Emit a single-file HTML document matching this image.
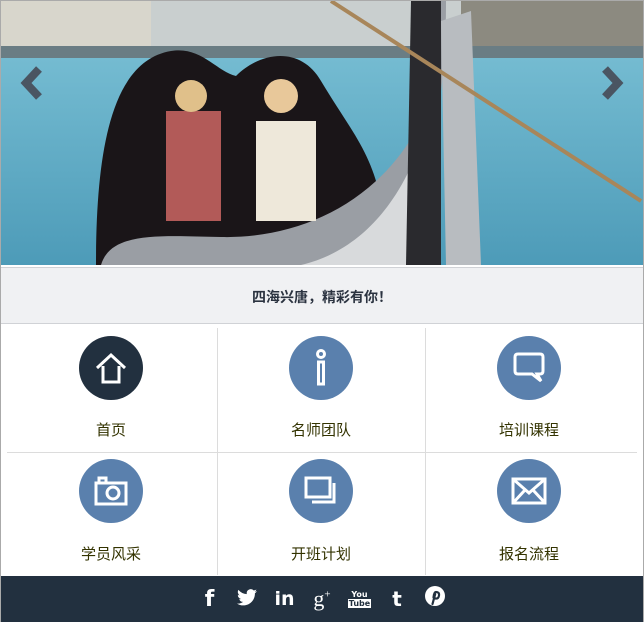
<!DOCTYPE html>
<html><head><meta charset="utf-8"><style>
*{margin:0;padding:0;box-sizing:border-box}
body{width:644px;height:622px;overflow:hidden;background:#fff;font-family:"Liberation Sans","Noto Sans CJK SC",sans-serif;position:relative}
.frame{position:absolute;left:0;top:0;width:644px;height:622px;border:1px solid #aaa;border-bottom:none}
.band{position:absolute;left:1px;top:267px;width:642px;height:57px;background:#f0f1f3;border-top:1px solid #d0d2d6;border-bottom:1px solid #d0d2d6;text-align:center;line-height:58px;font-weight:bold;font-size:14px;color:#2b3340}
.cell{position:absolute;width:208px;height:124px;text-align:center}
.circ{position:absolute;left:50%;top:8px;width:64px;height:64px;margin-left:-32px;border-radius:50%;background:#5a80ad;display:flex;align-items:center;justify-content:center}
.lbl{position:absolute;left:0;right:0;top:91px;font-size:15px;color:#333300}
.vl{position:absolute;width:1px;background:#dcdcdc}
.hl{position:absolute;height:1px;background:#dcdcdc}
.foot{position:absolute;left:1px;top:576px;width:642px;height:46px;background:#22303f;display:flex;justify-content:center;align-items:center;color:#fff}
.foot span{width:37.5px;text-align:center;font-weight:bold;font-size:22px;font-family:"DejaVu Sans","Liberation Sans",sans-serif}
</style></head><body>
<svg style="position:absolute;left:1px;top:1px" width="642" height="264" viewBox="0 0 642 264">
<defs><linearGradient id="w" x1="0" y1="0" x2="0" y2="1"><stop offset="0" stop-color="#7fc4d8"/><stop offset="1" stop-color="#4d9bb8"/></linearGradient></defs>
<rect width="642" height="264" fill="url(#w)"/>
<rect width="642" height="55" fill="#c9cfcf"/>
<rect x="0" y="0" width="150" height="55" fill="#d8d6cc"/>
<rect x="460" y="0" width="182" height="50" fill="#8c8a80"/>
<rect x="0" y="45" width="642" height="12" fill="#6a7d84"/>
<path d="M95 264 C95 150 110 60 170 50 C200 45 215 70 235 75 C260 50 300 45 320 80 C350 130 370 150 380 200 L390 264Z" fill="#1a1518"/>
<path d="M100 264 C110 230 160 235 220 236 C300 238 380 200 420 120 C430 80 432 30 435 0 L445 0 C445 60 440 140 410 200 C380 250 330 264 300 264Z" fill="#9a9ea4"/>
<path d="M300 264 C360 250 400 200 420 140 L430 264Z" fill="#d8dadc"/>
<path d="M410 0 L440 0 L440 264 L405 264Z" fill="#2a2a2e"/>
<path d="M440 20 L470 10 L480 264 L445 264Z" fill="#b8bcc0"/>
<path d="M330 0 L640 200" stroke="#a8865a" stroke-width="4"/>
<rect x="165" y="110" width="55" height="110" fill="#b25a58"/>
<circle cx="190" cy="95" r="16" fill="#e0c08a"/>
<rect x="255" y="120" width="60" height="100" fill="#eee8da"/>
<circle cx="280" cy="95" r="17" fill="#e8c89a"/>
<path d="M38 68 L25 82 L38 96" stroke="#4a5562" stroke-width="8" fill="none"/>
<path d="M604 68 L617 82 L604 96" stroke="#4a5562" stroke-width="8" fill="none"/>
</svg>
<div class="band">四海兴唐，精彩有你！</div>
<div class="vl" style="left:217px;top:328px;height:247px"></div>
<div class="vl" style="left:425px;top:328px;height:247px"></div>
<div class="hl" style="left:7px;top:452px;width:630px"></div>

<div class="cell" style="left:7px;top:328px"><div class="circ" style="background:#22303f"><svg width="34" height="34" viewBox="0 0 34 34" fill="none" stroke="#fff" stroke-width="3"><path d="M3 17 L17 4 L31 17 M9 15 V31 H25 V15"/></svg></div><div class="lbl">首页</div></div>
<div class="cell" style="left:217px;top:328px"><div class="circ"><svg width="34" height="40" viewBox="0 0 34 40" fill="none" stroke="#fff" stroke-width="3"><circle cx="17" cy="6" r="3.5"/><rect x="14.5" y="14" width="5" height="22"/></svg></div><div class="lbl">名师团队</div></div>
<div class="cell" style="left:425px;top:328px"><div class="circ"><svg width="34" height="34" viewBox="0 0 34 34" fill="none" stroke="#fff" stroke-width="3"><path d="M6 3 H28 Q31 3 31 6 V20 Q31 23 28 23 H25 L29 30 L20 23 H6 Q3 23 3 20 V6 Q3 3 6 3Z"/></svg></div><div class="lbl">培训课程</div></div>

<div class="cell" style="left:7px;top:452px"><div class="circ" style="top:7px"><svg width="34" height="30" viewBox="0 0 34 30" fill="none" stroke="#fff" stroke-width="3"><rect x="2" y="7" width="30" height="21"/><rect x="5" y="2" width="7" height="5"/><circle cx="19" cy="17" r="6"/></svg></div><div class="lbl">学员风采</div></div>
<div class="cell" style="left:217px;top:452px"><div class="circ" style="top:7px"><svg width="34" height="30" viewBox="0 0 34 30" fill="none" stroke="#fff" stroke-width="3"><rect x="2" y="2" width="24" height="19"/><path d="M30 7 V26 H8"/></svg></div><div class="lbl">开班计划</div></div>
<div class="cell" style="left:425px;top:452px"><div class="circ" style="top:7px"><svg width="36" height="28" viewBox="0 0 36 28" fill="none" stroke="#fff" stroke-width="3"><rect x="2" y="2" width="32" height="24"/><path d="M2 2 L18 16 L34 2 M2 26 L14 13 M34 26 L22 13"/></svg></div><div class="lbl">报名流程</div></div>

<div class="foot">
<span>f</span>
<span><svg width="20" height="17" viewBox="0 0 24 20"><path fill="#fff" d="M24 2.4a10 10 0 0 1-2.8.8A5 5 0 0 0 23.3.4a10 10 0 0 1-3.1 1.2A4.9 4.9 0 0 0 11.8 6 14 14 0 0 1 1.7.9a4.9 4.9 0 0 0 1.5 6.6A4.9 4.9 0 0 1 1 6.9 4.9 4.9 0 0 0 4.9 11.8a5 5 0 0 1-2.2.1 4.9 4.9 0 0 0 4.6 3.4A9.9 9.9 0 0 1 0 17.3 14 14 0 0 0 7.5 19.5c9 0 14-7.5 14-14v-.6A10 10 0 0 0 24 2.4z"/></svg></span>
<span style="font-size:19px">in</span>
<span style="font-family:'Liberation Serif',serif;font-weight:normal;font-size:22px">g<sup style="font-size:11px">+</sup></span>
<span style="font-size:8px;line-height:9px">You<br><b style="background:#fff;color:#22303f;padding:0 1px">Tube</b></span>
<span style="font-size:20px">t</span>
<span><svg width="20" height="20" viewBox="0 0 20 20"><circle cx="10" cy="10" r="10" fill="#fff"/><path d="M8.5 11.5 Q9 6 11 6 Q14.5 6 14 9.5 Q13.5 13 10.5 12.5 M10.2 8 L7.5 18" stroke="#22303f" stroke-width="2.2" fill="none" stroke-linecap="round"/></svg></span>
</div>
<div class="frame"></div>
</body></html>
